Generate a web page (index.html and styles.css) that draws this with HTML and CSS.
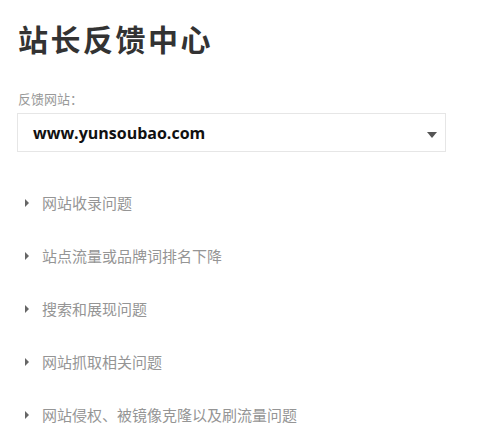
FILE: index.html
```html
<!DOCTYPE html>
<html lang="zh">
<head>
<meta charset="utf-8">
<link rel="stylesheet" href="styles.css">
</head>
<body>
<div class="page">
  <h1 class="title">站长反馈中心</h1>
  <div class="label">反馈网站：</div>
  <div class="select">
    <span class="select-value">www.yunsoubao.com</span>
    <span class="caret"></span>
  </div>
  <ul class="topics">
    <li class="topic"><span class="tri"></span><span class="topic-text">网站收录问题</span></li>
    <li class="topic"><span class="tri"></span><span class="topic-text">站点流量或品牌词排名下降</span></li>
    <li class="topic"><span class="tri"></span><span class="topic-text">搜索和展现问题</span></li>
    <li class="topic"><span class="tri"></span><span class="topic-text">网站抓取相关问题</span></li>
    <li class="topic"><span class="tri"></span><span class="topic-text">网站侵权、被镜像克隆以及刷流量问题</span></li>
  </ul>
</div>
</body>
</html>
```

FILE: styles.css
```css
html, body {
  margin: 0;
  padding: 0;
  background: #ffffff;
}
body {
  font-family: "Noto Sans CJK SC", "Noto Sans", sans-serif;
}
.page {
  width: 500px;
  height: 446px;
  padding: 20px 0 0 18px;
  box-sizing: border-box;
  overflow: hidden;
}
.title {
  margin: 0;
  font-size: 30px;
  line-height: 36px;
  font-weight: 700;
  color: #333333;
  letter-spacing: 2.5px;
}
.label {
  margin-top: 34px;
  font-size: 13px;
  line-height: 18px;
  color: #999999;
}
.select {
  margin-top: 5px;
  margin-left: -1px;
  width: 429px;
  height: 39px;
  box-sizing: border-box;
  border: 1px solid #e6e6e6;
  display: flex;
  align-items: center;
  justify-content: space-between;
  padding: 0 8px 0 15px;
}
.select-value {
  font-family: "Open Sans", "Noto Sans", sans-serif;
  font-weight: 700;
  font-size: 16px;
  color: #111111;
}
.caret {
  width: 0;
  height: 0;
  border-left: 5px solid transparent;
  border-right: 5px solid transparent;
  border-top: 6px solid #555555;
  margin-top: 4px;
}
.topics {
  list-style: none;
  margin: 24px 0 0 0;
  padding: 0;
}
.topic {
  display: flex;
  align-items: center;
  height: 53px;
  padding-left: 7px;
}
.tri {
  width: 0;
  height: 0;
  border-top: 4px solid transparent;
  border-bottom: 4px solid transparent;
  border-left: 4px solid #666666;
  margin-right: 13px;
}
.topic-text {
  font-size: 15px;
  color: #959595;
}
```
